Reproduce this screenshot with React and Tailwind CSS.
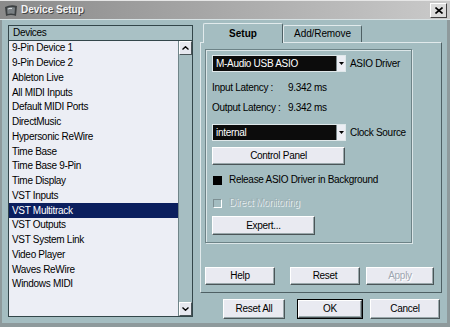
import React from "react";

const devices = [
  "9-Pin Device 1",
  "9-Pin Device 2",
  "Ableton Live",
  "All MIDI Inputs",
  "Default MIDI Ports",
  "DirectMusic",
  "Hypersonic ReWire",
  "Time Base",
  "Time Base 9-Pin",
  "Time Display",
  "VST Inputs",
  "VST Multitrack",
  "VST Outputs",
  "VST System Link",
  "Video Player",
  "Waves ReWire",
  "Windows MIDI",
];

function Btn({ children, className = "", disabled = false }) {
  return (
    <div
      className={
        "flex items-center justify-center bg-[#e9eaf1] border-t border-l border-[#ffffff] border-r border-b border-r-[#4a5558] border-b-[#4a5558] shadow-[inset_-1px_-1px_0_#9aa8ab] " +
        (disabled ? "text-[#9ea6b0] [text-shadow:1px_1px_0_#ffffff] " : "text-black ") +
        className
      }
    >
      {children}
    </div>
  );
}

function Combo({ text }) {
  return (
    <div className="w-[134px] h-[17px] flex border border-[#dfe8ea]">
      <div className="flex-1 bg-[#0c0c0c] text-white flex items-center pl-[3px]">{text}</div>
      <div className="w-[9px] bg-[#eceef4] border-l border-[#7c8a8d] flex items-center justify-center">
        <svg width="5" height="3" viewBox="0 0 5 3">
          <polygon points="0,0 5,0 2.5,3" fill="#000" />
        </svg>
      </div>
    </div>
  );
}

export default function App() {
  return (
    <div className="w-[450px] h-[327px] overflow-hidden flex flex-col bg-[#a4bdc1] font-['Liberation_Sans',Arial,sans-serif] text-[10px] tracking-[-0.3px] leading-none text-black">
      {/* Title bar */}
      <div className="h-[20px] shrink-0 flex items-center bg-linear-to-r from-[#8a8a8a] to-[#cacaca] border-t border-[#e6e6e6] border-b border-b-[#d8e2e4] pl-[4px] pr-[3px]">
        <svg width="14" height="13" viewBox="0 0 14 13">
          <path d="M1 3 Q7 0 13 2 L12 12 Q7 10 2 12 Z" fill="#3c4042" />
          <path d="M3 4 Q7 2.5 11 3.5 L10.5 10 Q7 9 3.5 10 Z" fill="#7a8084" />
          <path d="M4 5 Q6 4 8 4.5" stroke="#d8dcdf" strokeWidth="1" fill="none" />
        </svg>
        <span className="ml-[3px] text-[10px] tracking-normal font-bold text-[#f4f4f4] [text-shadow:1px_1px_0_#454545]">Device Setup</span>
        <div className="ml-auto w-[17px] h-[15px] bg-[#dcdcdc] border-t border-l border-white border-r border-b border-r-[#404040] border-b-[#404040] flex items-center justify-center">
          <svg width="8" height="7" viewBox="0 0 8 7">
            <path d="M0.5 0.5 L7.5 6.5 M7.5 0.5 L0.5 6.5" stroke="#000" strokeWidth="1.6" />
          </svg>
        </div>
      </div>

      {/* Body */}
      <div className="flex-1 flex border-l-2 border-r-[3px] border-b-4 border-[#8e9a9c] pl-[6px] pt-[5px]">
        {/* Device list */}
        <div className="w-[185px] h-[292px] shrink-0 flex flex-col border border-[#33464a] bg-[#a9c1c5]">
          <div className="h-[15px] shrink-0 flex items-center pl-[4px] border-b border-[#33464a]">Devices</div>
          <div className="flex-1 flex min-h-0">
            <div className="flex-1 bg-[#eceef5]">
              {devices.map((d) => (
                <div
                  key={d}
                  className={
                    "h-[14.75px] flex items-center pl-[3px] " +
                    (d === "VST Multitrack" ? "bg-[#0b1f5e] text-white" : "")
                  }
                >
                  {d}
                </div>
              ))}
            </div>
            <div className="w-[14px] shrink-0 border-l border-[#6f8488] bg-[#a6bec2] flex flex-col justify-between">
              <div className="h-[14px] bg-[#e6e8ef] border-t border-l border-white border-r border-b border-r-[#4a5558] border-b-[#4a5558] flex items-center justify-center">
                <svg width="7" height="4" viewBox="0 0 7 4">
                  <path d="M0.5 3.5 L3.5 0.7 L6.5 3.5" stroke="#000" strokeWidth="1.3" fill="none" />
                </svg>
              </div>
              <div className="h-[14px] bg-[#e6e8ef] border-t border-l border-white border-r border-b border-r-[#4a5558] border-b-[#4a5558] flex items-center justify-center">
                <svg width="7" height="4" viewBox="0 0 7 4">
                  <path d="M0.5 0.5 L3.5 3.3 L6.5 0.5" stroke="#000" strokeWidth="1.3" fill="none" />
                </svg>
              </div>
            </div>
          </div>
        </div>

        {/* Right side */}
        <div className="ml-[7px] w-[242px] shrink-0 mt-[-2px] flex flex-col">
          {/* Tabs */}
          <div className="h-[19px] shrink-0 flex items-end pl-[3px]">
            <div className="w-[80px] h-[20px] mb-[-1px] bg-[#a4bdc1] border-t border-l border-[#e1eaec] border-r border-r-[#4e6064] rounded-t-[2px] flex items-center justify-center text-[10px] tracking-normal font-bold relative z-10">
              Setup
            </div>
            <div className="w-[79px] h-[17px] bg-[#a4bdc1] border-t border-l border-[#e1eaec] border-r border-r-[#4e6064] rounded-t-[2px] flex items-center justify-center tracking-[-0.1px]">
              Add/Remove
            </div>
          </div>
          {/* Panel */}
          <div className="h-[251px] shrink-0 border-t border-l border-[#e1eaec] border-r border-b border-r-[#4e6064] border-b-[#4e6064] pl-[4px] pt-[6px] flex flex-col">
            <div className="w-[207px] h-[194px] border border-[#6d8387] shadow-[inset_1px_1px_0_#dbe6e8,1px_1px_0_#dbe6e8] pl-[6px] flex flex-col">
              <div className="mt-[5px] flex items-center">
                <Combo text="M-Audio USB ASIO" />
                <span className="ml-[4px]">ASIO Driver</span>
              </div>
              <div className="mt-[8px] h-[15px] flex items-center">
                <span className="w-[76px]">Input Latency :</span>
                <span>9.342 ms</span>
              </div>
              <div className="mt-[5px] h-[15px] flex items-center">
                <span className="w-[76px]">Output Latency :</span>
                <span>9.342 ms</span>
              </div>
              <div className="mt-[9px] flex items-center">
                <Combo text="internal" />
                <span className="ml-[4px]">Clock Source</span>
              </div>
              <Btn className="mt-[6px] w-[133px] h-[18px]">Control Panel</Btn>
              <div className="mt-[8px] h-[14px] flex items-center">
                <div className="w-[9px] h-[9px] bg-black ml-[1px]" />
                <span className="ml-[7px]">Release ASIO Driver in Background</span>
              </div>
              <div className="mt-[9px] h-[14px] flex items-center">
                <div className="w-[9px] h-[9px] ml-[1px] border border-t-[#7d8f93] border-l-[#7d8f93] border-r-white border-b-white bg-[#a4bdc1]" />
                <span className="ml-[7px] text-[#9db0b4] [text-shadow:1px_1px_0_#e6eef0]">Direct Monitoring</span>
              </div>
              <Btn className="mt-[6px] w-[103px] h-[19px]">Expert...</Btn>
            </div>
            <div className="mt-[24px] flex">
              <Btn className="w-[70px] h-[18px]">Help</Btn>
              <Btn className="ml-[15px] w-[70px] h-[18px]">Reset</Btn>
              <Btn className="ml-[6px] w-[68px] h-[18px]" disabled>Apply</Btn>
            </div>
          </div>
          {/* Bottom buttons */}
          <div className="mt-[6px] flex">
            <Btn className="ml-[23px] w-[62px] h-[20px]">Reset All</Btn>
            <div className="ml-[12px] w-[66px] h-[20px] border border-black flex">
              <Btn className="flex-1">OK</Btn>
            </div>
            <Btn className="ml-[7px] w-[70px] h-[20px]">Cancel</Btn>
          </div>
        </div>
      </div>
    </div>
  );
}
